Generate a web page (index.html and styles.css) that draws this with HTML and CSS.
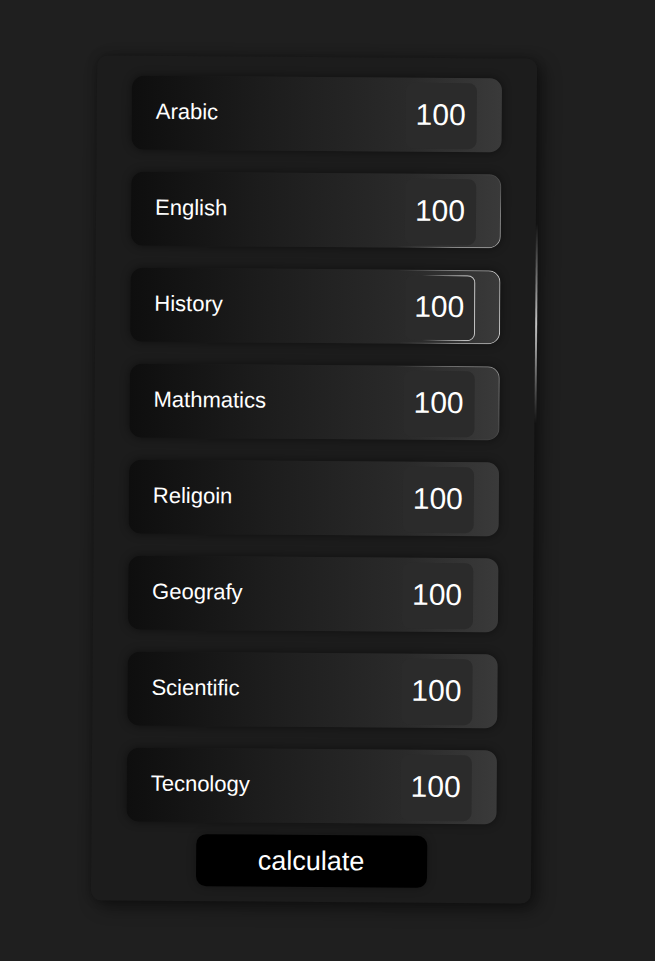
FILE: index.html
```html
<!DOCTYPE html>
<html>
<head>
<meta charset="utf-8">
<link rel="stylesheet" href="styles.css">
</head>
<body>
<div class="card">
  <div class="row"><label>Arabic</label><input class="score" type="text" value="100"></div>
  <div class="row glow-low"><label>English</label><input class="score" type="text" value="100"></div>
  <div class="row glow-mid"><label>History</label><input class="score score-glow" type="text" value="100"></div>
  <div class="row glow-high"><label>Mathmatics</label><input class="score" type="text" value="100"></div>
  <div class="row"><label>Religoin</label><input class="score" type="text" value="100"></div>
  <div class="row"><label>Geografy</label><input class="score" type="text" value="100"></div>
  <div class="row"><label>Scientific</label><input class="score" type="text" value="100"></div>
  <div class="row"><label>Tecnology</label><input class="score" type="text" value="100"></div>
  <button class="calc">calculate</button>
</div>
</body>
</html>
```
FILE: styles.css
```css
html, body {
  margin: 0;
  padding: 0;
  background: #1f1f1f;
  font-family: "Liberation Sans", Arial, sans-serif;
}
body {
  height: 961px;
  overflow: hidden;
}
.card {
  position: relative;
  width: 440px;
  height: 845px;
  box-sizing: border-box;
  margin: 57px 0 0 94px;
  padding: 20px 0 15px;
  background: #1c1c1c;
  border-radius: 10px;
  box-shadow: 6px 6px 18px rgba(0, 0, 0, 0.45), 0 0 10px rgba(0, 0, 0, 0.25);
  transform: rotate(0.43deg);
  display: flex;
  flex-direction: column;
  align-items: center;
  gap: 22px;
}
.card::after {
  content: "";
  position: absolute;
  right: -2px;
  top: 165px;
  width: 2px;
  height: 200px;
  background: linear-gradient(to bottom, rgba(255,255,255,0), rgba(255,255,255,0.75) 50%, rgba(255,255,255,0));
}
.row {
  position: relative;
  width: 370px;
  height: 74px;
  box-sizing: border-box;
  border-radius: 12px;
  background: linear-gradient(to right, #0e0e0e 0%, #1c1c1c 35%, #2a2a2a 75%, #3a3a3a 100%);
  box-shadow: 0 0 10px rgba(0, 0, 0, 0.45);
  display: flex;
  align-items: center;
  justify-content: space-between;
  padding: 0 25px 0 24px;
  flex-shrink: 0;
}
.row label {
  color: #ffffff;
  font-size: 22px;
  margin-top: -2px;
}
.score {
  width: 71px;
  height: 66px;
  margin-top: 2px;
  box-sizing: border-box;
  border: none;
  outline: none;
  border-radius: 8px;
  background: #2b2b2b;
  color: #ffffff;
  font-family: "Liberation Sans", Arial, sans-serif;
  font-size: 30px;
  text-align: right;
  padding: 0 11px 3px 0;
}
.score-glow {
  border: 1px solid transparent;
  padding-right: 10px;
  background:
    linear-gradient(#2b2b2b, #2b2b2b) padding-box,
    linear-gradient(to right, rgba(255,255,255,0) 25%, rgba(255,255,255,0.7) 85%) border-box;
}
.row::after {
  content: "";
  position: absolute;
  inset: 0;
  border-radius: 12px;
  border: 1px solid rgba(255, 255, 255, 0.75);
  pointer-events: none;
  opacity: 0;
}
.glow-low::after {
  opacity: 1;
  -webkit-mask-image: radial-gradient(circle at 100% 140%, #000 0, rgba(0,0,0,0.5) 60px, transparent 110px);
  mask-image: radial-gradient(circle at 100% 140%, #000 0, rgba(0,0,0,0.5) 60px, transparent 110px);
}
.glow-mid::after {
  opacity: 1;
  -webkit-mask-image: linear-gradient(to right, transparent 72%, #000 100%);
  mask-image: linear-gradient(to right, transparent 72%, #000 100%);
}
.glow-high::after {
  opacity: 1;
  -webkit-mask-image: radial-gradient(circle at 100% -40%, rgba(0,0,0,0.8) 0, rgba(0,0,0,0.4) 60px, transparent 110px);
  mask-image: radial-gradient(circle at 100% -40%, rgba(0,0,0,0.8) 0, rgba(0,0,0,0.4) 60px, transparent 110px);
}
.calc {
  width: 231px;
  height: 52px;
  margin-top: -10px;
  border: none;
  border-radius: 10px;
  background: #000000;
  color: #ffffff;
  font-family: "Liberation Sans", Arial, sans-serif;
  font-size: 27px;
  box-shadow: 0 0 10px rgba(0, 0, 0, 0.3);
  flex-shrink: 0;
}
```
